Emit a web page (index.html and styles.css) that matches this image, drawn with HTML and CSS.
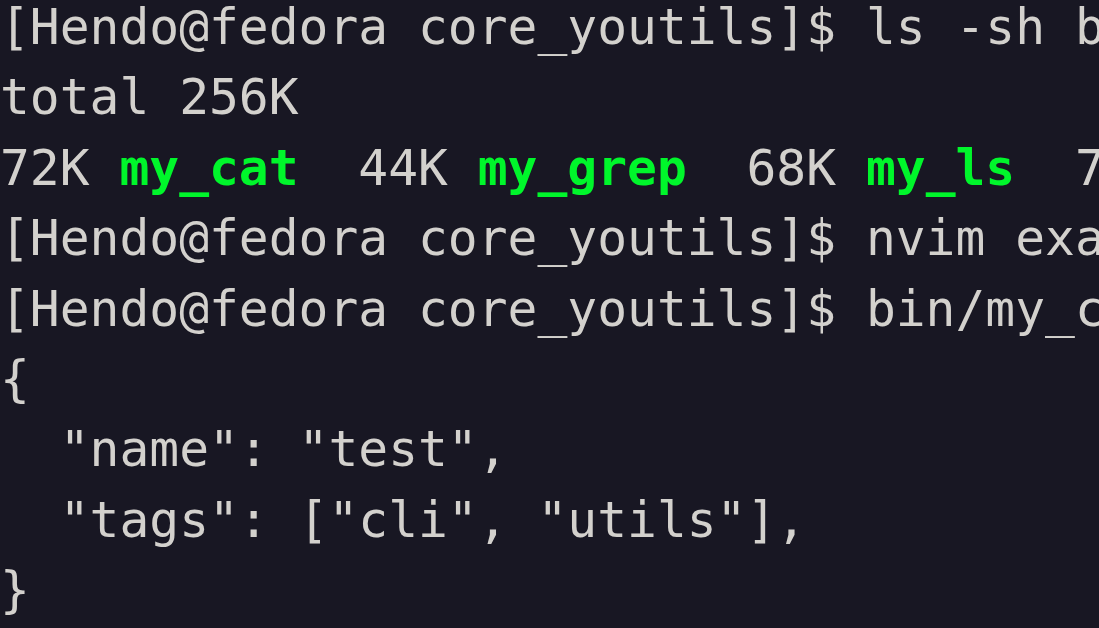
FILE: index.html
```html
<!DOCTYPE html>
<html lang="en">
<head>
<meta charset="utf-8">
<title>Terminal</title>
<link rel="stylesheet" href="styles.css">
</head>
<body>
<main class="term">
<pre class="out"><span class="line">[Hendo@fedora core_youtils]$ ls -sh bin</span>
<span class="line">total 256K</span>
<span class="line">72K <b class="exe">my_cat</b>  44K <b class="exe">my_grep</b>  68K <b class="exe">my_ls</b>  72K <b class="exe">my_wc</b></span>
<span class="line">[Hendo@fedora core_youtils]$ nvim example.json</span>
<span class="line">[Hendo@fedora core_youtils]$ bin/my_cat example.json</span>
<span class="line">{</span>
<span class="line">  "name": "test",</span>
<span class="line">  "tags": ["cli", "utils"],</span>
<span class="line">}</span></pre>
</main>
</body>
</html>
```

FILE: styles.css
```css
html, body {
  margin: 0;
  padding: 0;
  background: #181723;
  height: 100%;
  overflow: hidden;
}

.term {
  width: 1099px;
  height: 628px;
  overflow: hidden;
  background: #181723;
}

.out {
  margin: -8px 0 0 0;
  padding: 0;
  font-family: "DejaVu Sans Mono", monospace;
  font-size: 49.6px;
  line-height: 70.4px;
  color: #d3d1cd;
  white-space: pre;
}

.exe {
  color: #00f62b;
  font-weight: bold;
}
```
